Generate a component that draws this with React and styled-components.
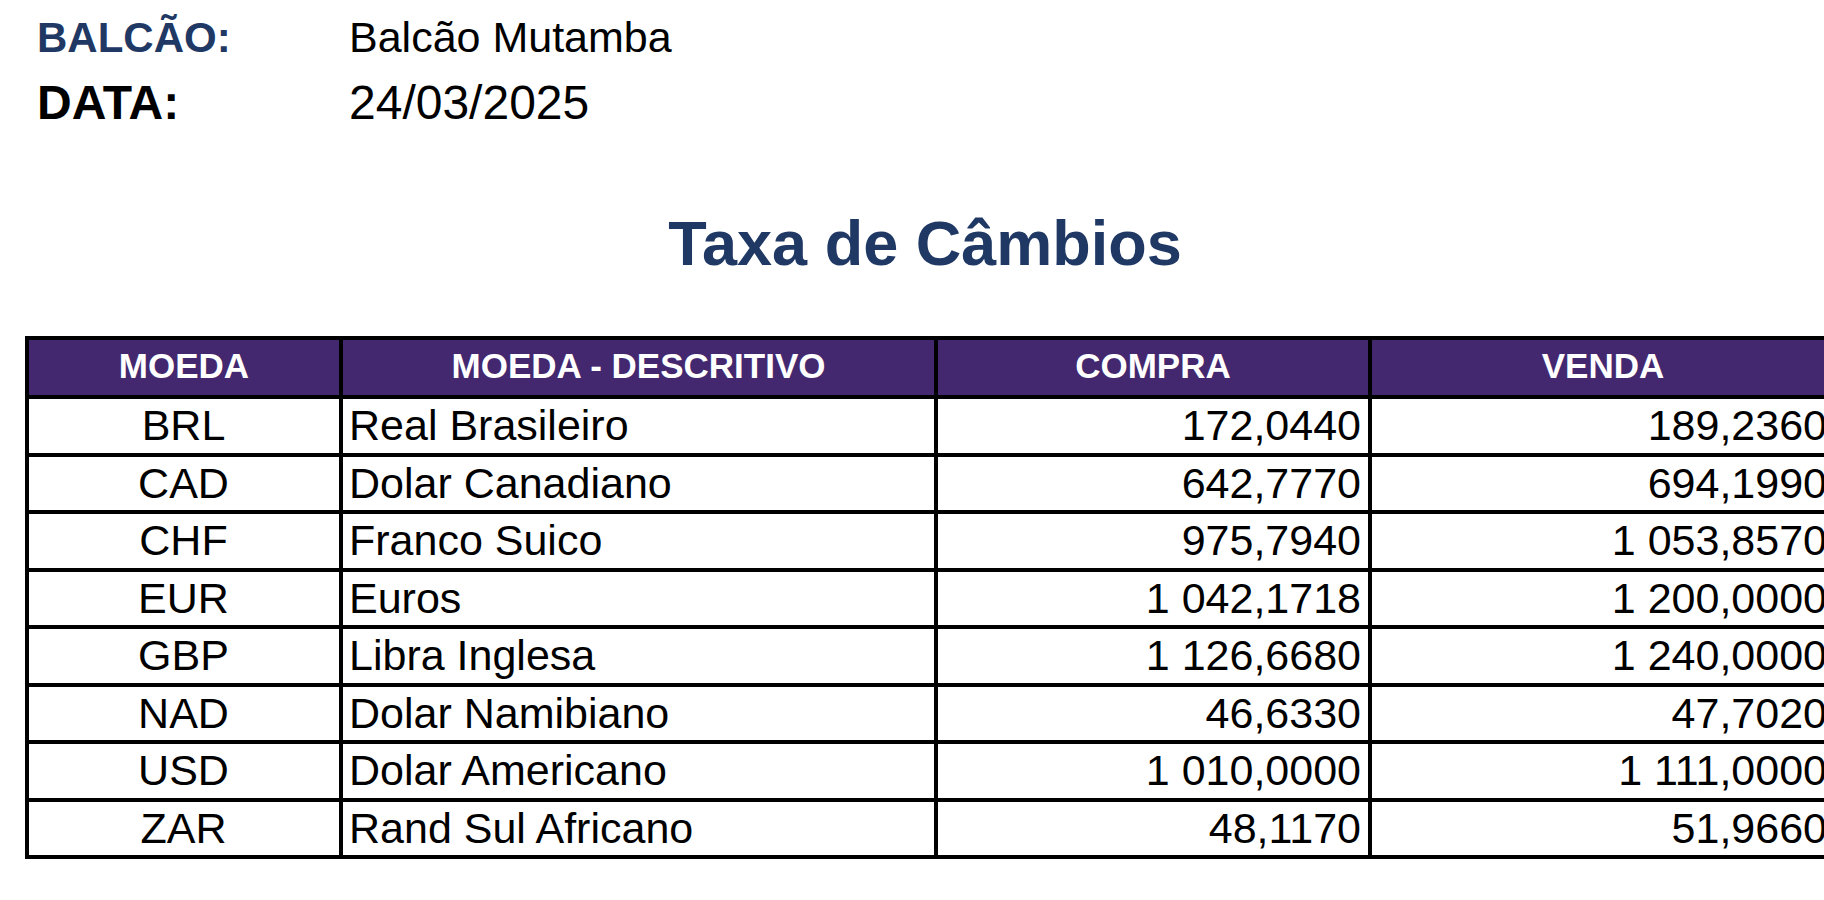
import React from "react";
import styled, { createGlobalStyle } from "styled-components";

const rates = [
  { code: "BRL", name: "Real Brasileiro", buy: "172,0440", sell: "189,2360" },
  { code: "CAD", name: "Dolar Canadiano", buy: "642,7770", sell: "694,1990" },
  { code: "CHF", name: "Franco Suico", buy: "975,7940", sell: "1 053,8570" },
  { code: "EUR", name: "Euros", buy: "1 042,1718", sell: "1 200,0000" },
  { code: "GBP", name: "Libra Inglesa", buy: "1 126,6680", sell: "1 240,0000" },
  { code: "NAD", name: "Dolar Namibiano", buy: "46,6330", sell: "47,7020" },
  { code: "USD", name: "Dolar Americano", buy: "1 010,0000", sell: "1 111,0000" },
  { code: "ZAR", name: "Rand Sul Africano", buy: "48,1170", sell: "51,9660" },
];

const GlobalStyle = createGlobalStyle`
  html, body {
    margin: 0;
    background: #ffffff;
    overflow: hidden;
  }
  body {
    font-family: "Liberation Sans", Arial, sans-serif;
    color: #000000;
  }
`;

const Page = styled.div`
  width: 1824px;
  padding-top: 5px;
`;

const InfoGrid = styled.div`
  display: grid;
  grid-template-columns: 312px auto;
  grid-auto-rows: 65px;
  padding-left: 37px;
`;

const Label = styled.div`
  font-size: ${(p) => p.size}px;
  line-height: 65px;
  font-weight: bold;
  color: ${(p) => p.color || "#000000"};
`;

const Value = styled.div`
  font-size: ${(p) => p.size}px;
  line-height: 65px;
`;

const Title = styled.h1`
  margin: 77px 0 0;
  padding-left: 26px;
  width: 1798px;
  text-align: center;
  font-size: 63px;
  line-height: 62px;
  font-weight: bold;
  color: #1f3864;
`;

const Table = styled.table`
  margin: 62px 0 0 25px;
  border-collapse: collapse;
  table-layout: fixed;
  width: 1809px;
  border: 4px solid #000000;
`;

const HeadCell = styled.th`
  height: 51px;
  padding: 0 8px 4px;
  background: #432870;
  color: #ffffff;
  font-size: 35px;
  font-weight: bold;
  text-align: center;
  border: 4px solid #000000;
`;

const Cell = styled.td`
  height: 53.5px;
  padding: 0 7px 0 6px;
  font-size: 43px;
  text-align: ${(p) => p.align || "left"};
  border: 4px solid #000000;
  white-space: nowrap;
`;

export default function App() {
  return (
    <Page>
      <GlobalStyle />
      <InfoGrid>
        <Label size={42} color="#1f3864">BALCÃO:</Label>
        <Value size={43}>Balcão Mutamba</Value>
        <Label size={48}>DATA:</Label>
        <Value size={48}>24/03/2025</Value>
      </InfoGrid>
      <Title>Taxa de Câmbios</Title>
      <Table>
        <colgroup>
          <col style={{ width: 314 }} />
          <col style={{ width: 595 }} />
          <col style={{ width: 434 }} />
          <col style={{ width: 466 }} />
        </colgroup>
        <thead>
          <tr>
            <HeadCell>MOEDA</HeadCell>
            <HeadCell>MOEDA - DESCRITIVO</HeadCell>
            <HeadCell>COMPRA</HeadCell>
            <HeadCell>VENDA</HeadCell>
          </tr>
        </thead>
        <tbody>
          {rates.map((r) => (
            <tr key={r.code}>
              <Cell align="center">{r.code}</Cell>
              <Cell>{r.name}</Cell>
              <Cell align="right">{r.buy}</Cell>
              <Cell align="right">{r.sell}</Cell>
            </tr>
          ))}
        </tbody>
      </Table>
    </Page>
  );
}
